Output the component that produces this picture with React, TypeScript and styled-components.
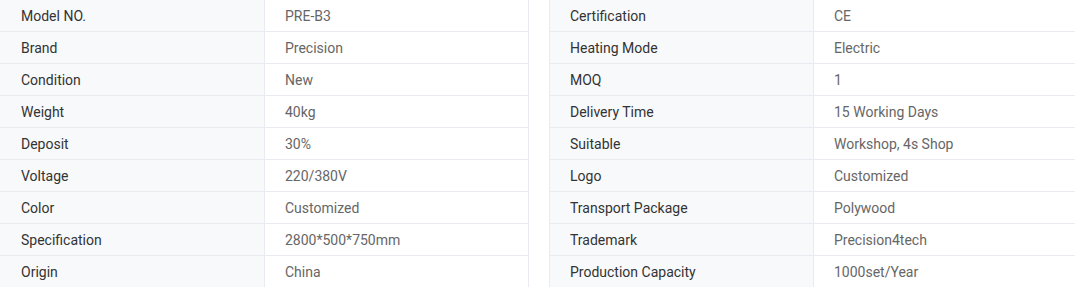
import { Fragment } from 'react'
import styled, { createGlobalStyle } from 'styled-components'

const GlobalStyle = createGlobalStyle`
  html, body {
    margin: 0;
    padding: 0;
    background: #fff;
    overflow: hidden;
  }
  body {
    font-family: Roboto, 'Liberation Sans', Arial, sans-serif;
    font-size: 14px;
  }
`

const Page = styled.div`
  display: flex;
  gap: 20px;
  width: 1075px;
  height: 287px;
  overflow: hidden;
`

const Table = styled.div<{ $side: 'left' | 'right' }>`
  display: grid;
  grid-template-columns: ${({ $side }) => ($side === 'left' ? '265px 264px' : '264px 262px')};
  flex: none;
  border-left: ${({ $side }) => ($side === 'right' ? '1px solid #e8ebf0' : 'none')};
`

const Cell = styled.div<{ $label?: boolean; $pad: number }>`
  box-sizing: border-box;
  height: 32px;
  padding-top: 1px;
  line-height: 30px;
  padding-left: ${({ $pad }) => $pad}px;
  border-right: 1px solid #e8ebf0;
  border-bottom: 1px solid #e8ebf0;
  background: ${({ $label }) => ($label ? '#f8f9fb' : '#fff')};
  color: ${({ $label }) => ($label ? '#333' : '#666')};
  white-space: nowrap;
`

const leftRows: [string, string][] = [
  ['Model NO.', 'PRE-B3'],
  ['Brand', 'Precision'],
  ['Condition', 'New'],
  ['Weight', '40kg'],
  ['Deposit', '30%'],
  ['Voltage', '220/380V'],
  ['Color', 'Customized'],
  ['Specification', '2800*500*750mm'],
  ['Origin', 'China'],
]

const rightRows: [string, string][] = [
  ['Certification', 'CE'],
  ['Heating Mode', 'Electric'],
  ['MOQ', '1'],
  ['Delivery Time', '15 Working Days'],
  ['Suitable', 'Workshop, 4s Shop'],
  ['Logo', 'Customized'],
  ['Transport Package', 'Polywood'],
  ['Trademark', 'Precision4tech'],
  ['Production Capacity', '1000set/Year'],
]

function SpecTable({ rows, side }: { rows: [string, string][]; side: 'left' | 'right' }) {
  const labelPad = side === 'left' ? 21 : 20
  return (
    <Table $side={side}>
      {rows.map(([k, v]) => (
        <Fragment key={k}>
          <Cell $label $pad={labelPad}>{k}</Cell>
          <Cell $pad={20}>{v}</Cell>
        </Fragment>
      ))}
    </Table>
  )
}

export default function App() {
  return (
    <>
      <GlobalStyle />
      <Page>
        <SpecTable rows={leftRows} side="left" />
        <SpecTable rows={rightRows} side="right" />
      </Page>
    </>
  )
}
